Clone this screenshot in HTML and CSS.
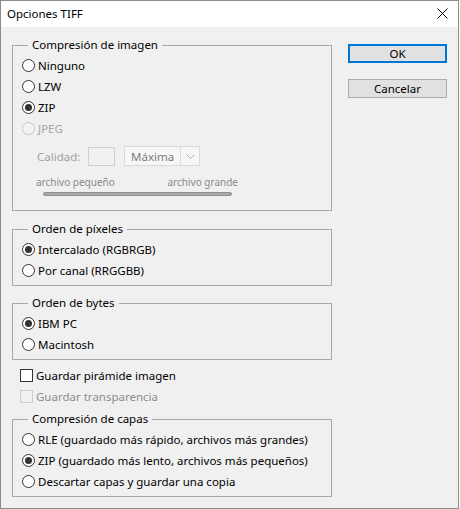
FILE: index.html
```html
<!DOCTYPE html>
<html lang="es">
<head>
<meta charset="utf-8">
<title>Opciones TIFF</title>
<link rel="stylesheet" href="styles.css">
</head>
<body>
<div class="window">
  <div class="titlebar">
    <span class="title">Opciones TIFF</span>
    <svg class="close" width="11" height="11" viewBox="0 0 11 11"><path d="M0.5 0.5 L10.5 10.5 M10.5 0.5 L0.5 10.5" stroke="#000" stroke-width="1" fill="none"/></svg>
  </div>
  <div class="body">
    <div class="left">
      <fieldset class="group g1">
        <legend>Compresión de imagen</legend>
        <div class="opt"><span class="radio"></span>Ninguno</div>
        <div class="opt"><span class="radio"></span>LZW</div>
        <div class="opt"><span class="radio checked"></span>ZIP</div>
        <div class="opt disabled"><span class="radio"></span>JPEG</div>
        <div class="quality">
          <span class="q-label">Calidad:</span>
          <span class="q-input"></span>
          <span class="q-select"><span class="q-value">Máxima</span><span class="q-arrow"><svg width="9" height="5" viewBox="0 0 9 5"><path d="M0.5 0.5 L4.5 4.5 L8.5 0.5" stroke="#b5b5b5" fill="none"/></svg></span></span>
        </div>
        <div class="scale-labels"><span>archivo pequeño</span><span>archivo grande</span></div>
        <div class="slider"></div>
      </fieldset>

      <fieldset class="group g2">
        <legend>Orden de píxeles</legend>
        <div class="opt"><span class="radio checked"></span>Intercalado (RGBRGB)</div>
        <div class="opt"><span class="radio"></span>Por canal (RRGGBB)</div>
      </fieldset>

      <fieldset class="group g3">
        <legend>Orden de bytes</legend>
        <div class="opt"><span class="radio checked"></span>IBM PC</div>
        <div class="opt"><span class="radio"></span>Macintosh</div>
      </fieldset>

      <div class="checks">
        <div class="opt chk"><span class="checkbox"></span>Guardar pirámide imagen</div>
        <div class="opt chk disabled"><span class="checkbox"></span>Guardar transparencia</div>
      </div>

      <fieldset class="group g4">
        <legend>Compresión de capas</legend>
        <div class="opt"><span class="radio"></span>RLE (guardado más rápido, archivos más grandes)</div>
        <div class="opt"><span class="radio checked"></span>ZIP (guardado más lento, archivos más pequeños)</div>
        <div class="opt"><span class="radio"></span>Descartar capas y guardar una copia</div>
      </fieldset>
    </div>
    <div class="buttons">
      <button class="btn default">OK</button>
      <button class="btn">Cancelar</button>
    </div>
  </div>
</div>
</body>
</html>
```
FILE: styles.css
```css
* { box-sizing: border-box; }
html, body { margin: 0; padding: 0; }
body {
  background: #ffffff;
  font-family: "Noto Sans", "Open Sans", sans-serif;
  font-size: 11.5px;
  color: #000;
}
.window {
  width: 459px;
  height: 509px;
  border: 1px solid #8c8c8c;
  background: #f0f0f0;
  display: flex;
  flex-direction: column;
}
.titlebar {
  height: 26px;
  background: #fff;
  display: flex;
  align-items: center;
  justify-content: space-between;
  padding: 0 10px 0 6px;
}
.title { font-size: 11.5px; line-height: 16px; }
.close { display: block; margin-top: -1px; }

.body {
  display: flex;
  padding: 10px 0 0 11px;
  gap: 16px;
}
.left {
  width: 320px;
  display: flex;
  flex-direction: column;
}
.group {
  margin: 0;
  border: 1px solid #a8a8a8;
  padding: 2px 0 4px 9px;
  min-width: 0;
}
.group legend {
  padding: 0 4px;
  margin-left: 6px;
  line-height: 16px;
}
.g1 { padding-bottom: 14px; }
.g2 { margin-top: 10px; }
.g3 { margin-top: 9px; }
.g4 { margin-top: 4px; }
.checks { margin-top: 5px; padding-left: 9px; }

.opt {
  display: flex;
  align-items: center;
  height: 21px;
  line-height: 16px;
  white-space: nowrap;
}
.radio {
  width: 13px;
  height: 13px;
  border: 1px solid #333;
  border-radius: 50%;
  background: #fff;
  margin-right: 3px;
  flex: none;
  display: flex;
  align-items: center;
  justify-content: center;
}
.radio.checked::after {
  content: "";
  width: 7px;
  height: 7px;
  border-radius: 50%;
  background: #333;
}
.opt.disabled { color: #a5a5a5; }
.opt.disabled .radio { border-color: #c6c6c6; background: #f3f3f3; }

.checkbox {
  width: 13px;
  height: 13px;
  border: 1px solid #333;
  background: #fff;
  margin-right: 3px;
  flex: none;
}
.chk .checkbox { margin-left: -1px; }
.opt.chk.disabled { color: #8d8d8d; }
.opt.chk.disabled .checkbox { border-color: #cccccc; background: #f0f0f0; }

.quality {
  display: flex;
  align-items: center;
  margin-top: 7px;
  margin-left: 15px;
  height: 20px;
  color: #a0a0a0;
}
.q-label { width: 51px; }
.q-input {
  width: 27px;
  height: 19px;
  border: 1px solid #cfcfcf;
  background: #f0f0f0;
}
.q-select {
  margin-left: 9px;
  width: 76px;
  height: 20px;
  border: 1px solid #d9d9d9;
  background: #f7f7f7;
  display: flex;
  align-items: center;
  color: #7a7a7a;
}
.q-value { flex: 1; padding-left: 6px; }
.q-arrow {
  width: 19px;
  height: 100%;
  border-left: 1px solid #dadada;
  display: flex;
  align-items: center;
  justify-content: center;
}
.q-arrow svg { display: block; }

.scale-labels {
  display: flex;
  justify-content: space-between;
  width: 202px;
  margin-left: 14px;
  margin-top: 9px;
  font-size: 10px;
  line-height: 14px;
  color: #8a8a8a;
}
.slider {
  margin-left: 21px;
  margin-top: 3px;
  width: 189px;
  height: 4px;
  border-radius: 2px;
  background: #a9a9a9;
  border: 1px solid #8f8f8f;
}

.buttons {
  display: flex;
  flex-direction: column;
  gap: 16px;
  padding-top: 7px;
}
.btn {
  width: 99px;
  height: 19px;
  padding: 0;
  font-family: inherit;
  font-size: 11.5px;
  line-height: 15px;
  color: #000;
  background: #e1e1e1;
  border: 1px solid #adadad;
}
.btn.default { border: 2px solid #0078d7; }
```
